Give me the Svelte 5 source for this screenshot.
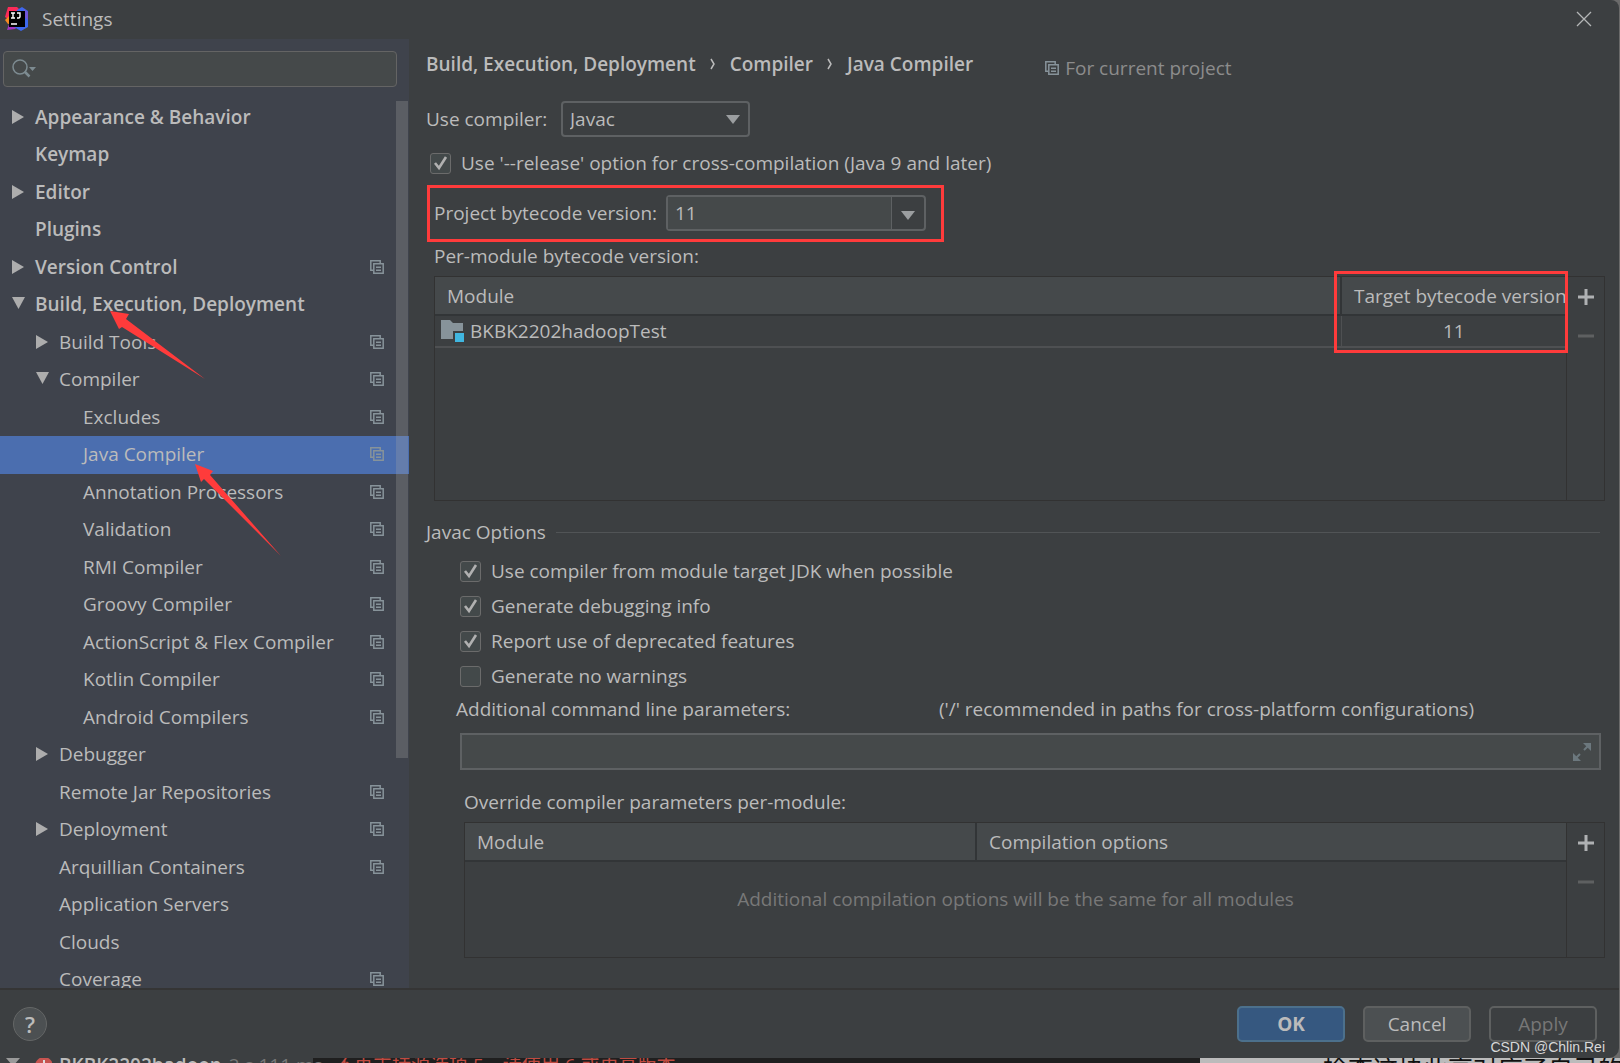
<script lang="ts">
	type Item = {
		label: string;
		level: number;
		arrow?: "open" | "closed";
		project?: boolean;
		selected?: boolean;
	};

	const items: Item[] = [
		{ label: "Appearance & Behavior", level: 0, arrow: "closed" },
		{ label: "Keymap", level: 0 },
		{ label: "Editor", level: 0, arrow: "closed" },
		{ label: "Plugins", level: 0 },
		{ label: "Version Control", level: 0, arrow: "closed", project: true },
		{ label: "Build, Execution, Deployment", level: 0, arrow: "open" },
		{ label: "Build Tools", level: 1, arrow: "closed", project: true },
		{ label: "Compiler", level: 1, arrow: "open", project: true },
		{ label: "Excludes", level: 2, project: true },
		{ label: "Java Compiler", level: 2, project: true, selected: true },
		{ label: "Annotation Processors", level: 2, project: true },
		{ label: "Validation", level: 2, project: true },
		{ label: "RMI Compiler", level: 2, project: true },
		{ label: "Groovy Compiler", level: 2, project: true },
		{ label: "ActionScript & Flex Compiler", level: 2, project: true },
		{ label: "Kotlin Compiler", level: 2, project: true },
		{ label: "Android Compilers", level: 2, project: true },
		{ label: "Debugger", level: 1, arrow: "closed" },
		{ label: "Remote Jar Repositories", level: 1, project: true },
		{ label: "Deployment", level: 1, arrow: "closed", project: true },
		{ label: "Arquillian Containers", level: 1, project: true },
		{ label: "Application Servers", level: 1 },
		{ label: "Clouds", level: 1 },
		{ label: "Coverage", level: 1, project: true },
	];

	let options = $state([
		{ label: "Use compiler from module target JDK when possible", checked: true },
		{ label: "Generate debugging info", checked: true },
		{ label: "Report use of deprecated features", checked: true },
		{ label: "Generate no warnings", checked: false },
	]);

	let release = $state(true);
	let compiler = $state("Javac");
	let bytecode = $state("11");
	let search = $state("");
	let parameters = $state("");
</script>

{#snippet copyIcon()}
	<svg class="copy" width="14" height="14" viewBox="0 0 14 14" aria-hidden="true">
		<path d="M3 10.2H.8V.8h9.4V3" />
		<path d="M3.8 3.8h9.4v9.4H3.8zM6 7.2h5M6 10.2h5" />
	</svg>
{/snippet}

{#snippet tools()}
	<div class="tools">
		<button aria-label="Add">
			<svg width="16" height="16" viewBox="0 0 16 16"><path d="M8 0v16M0 8h16" /></svg>
		</button>
		<button aria-label="Remove" disabled>
			<svg width="16" height="16" viewBox="0 0 16 16"><path d="M0 8h16" /></svg>
		</button>
	</div>
{/snippet}

<div class="screen">
	<div class="dialog">
		<header>
			<svg width="24" height="24" viewBox="0 0 24 24" aria-hidden="true">
				<path d="M3 0l9 0 4 4-8 11-8-5z" fill="#fc2b58" />
				<path d="M0 13l5-5 4 8-6 1z" fill="#f88a20" />
				<path d="M2 23l3-9 10 4-5 4z" fill="#a234c0" />
				<path d="M12 3l5-3 6 4v16l-7 4-7-4z" fill="#3d68ed" />
				<path d="M19 2l4 3v8l-5-4z" fill="#7256d8" />
				<path d="M4 4h16v16H4z" fill="#000" />
				<path d="M6 6h4M6 11h4M8 6v5M12 6h3v4l-1 1h-2M6 17h6" stroke="#fff" stroke-width="1.4" fill="none" />
			</svg>
			<span>Settings</span>
			<button class="close" aria-label="Close">
				<svg width="16" height="16" viewBox="0 0 16 16"><path d="M1 1l14 14M15 1L1 15" /></svg>
			</button>
		</header>

		<div class="body">
			<aside>
				<label class="search">
					<svg width="24" height="20" viewBox="0 0 24 20" aria-hidden="true">
						<circle cx="8" cy="8" r="7" />
						<path d="M12.500 12.500l5 5" stroke-width="2.500" />
						<path class="solid" d="M17 8h7l-3.500 4z" />
					</svg>
					<input type="text" aria-label="Search settings" bind:value={search} />
				</label>
				<nav>
					<ul>
						{#each items as item (item.label)}
							<li class="level-{item.level}" class:selected={item.selected}>
								<span class="arrow">
									{#if item.arrow === "closed"}
										<svg width="12" height="14" viewBox="0 0 12 14"><path d="M0 0l12 7-12 7z" /></svg>
									{:else if item.arrow === "open"}
										<svg width="13" height="16" viewBox="0 0 13 16"><path d="M0 1h13L6.500 13z" /></svg>
									{/if}
								</span>
								<a href="#settings">{item.label}</a>
								{#if item.project}{@render copyIcon()}{/if}
							</li>
						{/each}
					</ul>
					<div class="scrollbar"></div>
				</nav>
				<svg class="pointers" width="409" height="580" viewBox="0 0 409 580" aria-hidden="true">
					<path d="M110 311l19 3-3 5 79 60-83-52-3 2z" />
					<path d="M195 464l18 7-3 4 71 81-77-77-3 3z" />
				</svg>
			</aside>

			<main>
				<div class="crumbs">
					<b>Build, Execution, Deployment</b>
					<svg width="6" height="12" viewBox="0 0 6 12"><path d="M1 1l3 5-3 5" /></svg>
					<b>Compiler</b>
					<svg width="6" height="12" viewBox="0 0 6 12"><path d="M1 1l3 5-3 5" /></svg>
					<b>Java Compiler</b>
					<span class="scope">{@render copyIcon()} For current project</span>
				</div>

				<div class="compiler">
					<label for="compiler">Use compiler:</label>
					<span class="select">
						<select id="compiler" bind:value={compiler}>
							<option>Javac</option>
							<option>Eclipse</option>
						</select>
						<svg width="14" height="9" viewBox="0 0 14 9"><path d="M0 0h14L7 9z" /></svg>
					</span>
				</div>

				<label class="check release">
					<input type="checkbox" bind:checked={release} />
					Use '--release' option for cross-compilation (Java 9 and later)
				</label>

				<div class="project marked">
					<label for="bytecode">Project bytecode version:</label>
					<div class="combo">
						<input id="bytecode" type="text" bind:value={bytecode} />
						<button aria-label="Show versions">
							<svg width="14" height="9" viewBox="0 0 14 9"><path d="M0 0h14L7 9z" /></svg>
						</button>
					</div>
				</div>

				<p class="caption">Per-module bytecode version:</p>
				<div class="panel modules">
					<table>
						<thead>
							<tr><th>Module</th><th class="target">Target bytecode version</th></tr>
						</thead>
						<tbody>
							<tr>
								<td>
									<div class="module">
										<svg width="23" height="22" viewBox="0 0 23 22" aria-hidden="true">
											<path d="M0 0h9l3 3h10v16H0z" fill="#87939a" />
											<path d="M12 11h11v11H12z" fill="#3c3f41" />
											<path d="M14 13h9v9h-9z" fill="#40b6e0" />
										</svg>
										BKBK2202hadoopTest
									</div>
								</td>
								<td class="value">11</td>
							</tr>
						</tbody>
					</table>
					{@render tools()}
					<div class="frame"></div>
				</div>

				<fieldset>
					<legend>Javac Options</legend>
					<div class="options">
						{#each options as option (option.label)}
							<label class="check">
								<input type="checkbox" bind:checked={option.checked} />
								{option.label}
							</label>
						{/each}
					</div>
					<div class="hints">
						<label for="parameters">Additional command line parameters:</label>
						<span>('/' recommended in paths for cross-platform configurations)</span>
					</div>
					<div class="expandable">
						<input id="parameters" type="text" bind:value={parameters} />
						<button aria-label="Expand">
							<svg width="18" height="18" viewBox="0 0 18 18">
								<path d="M10 0h8v8zM0 10v8h8z" />
								<path d="M15 3l-4 4M3 15l4-4" class="line" />
							</svg>
						</button>
					</div>
					<p class="override">Override compiler parameters per-module:</p>
					<div class="panel overrides">
						<table>
							<thead>
								<tr><th class="name">Module</th><th>Compilation options</th></tr>
							</thead>
							<tbody>
								<tr>
									<td class="empty" colspan="2">Additional compilation options will be the same for all modules</td>
								</tr>
							</tbody>
						</table>
						{@render tools()}
					</div>
				</fieldset>
			</main>
		</div>

		<footer>
			<button class="help" aria-label="Help">?</button>
			<button class="primary">OK</button>
			<button>Cancel</button>
			<button disabled>Apply</button>
			<span class="watermark">CSDN @Chlin.Rei</span>
		</footer>
	</div>

	<div class="behind">
		<span class="run">
			<svg width="52" height="18" viewBox="0 0 52 18" aria-hidden="true">
				<path d="M6 0h14l-7 8z" fill="#9a9a9a" />
				<circle cx="44" cy="8" r="9" fill="#c75450" />
				<path d="M43 2h2v7h-2z" fill="#ddd" />
			</svg>
			<b>BKBK2202hadoop</b> 2 s 111 ms
		</span>
		<span class="error">不再支持源选项 5。请使用 6 或更高版本。</span>
		<span class="page">检查这块此高对应了自己的</span>
	</div>
</div>

<style>
	:global(body) {
		background: #6a6a6a;
	}

	.screen {
		display: flex;
		flex-direction: column;
		height: 100vh;
		overflow: hidden;
		color: #bbb;
		font: 19px/26px "Open Sans", "Noto Sans CJK SC", sans-serif;
	}

	.dialog {
		flex: 1;
		min-height: 0;
		display: flex;
		flex-direction: column;
		margin-right: 1px;
		background: #3c3f41;
		border-radius: 0 8px 10px 0;
	}

	button,
	input,
	select {
		box-sizing: border-box;
		margin: 0;
		color: inherit;
		font: inherit;
	}

	button {
		padding: 0;
		background: none;
		border: 0;
	}

	p {
		margin: 0;
	}

	header {
		box-sizing: border-box;
		display: flex;
		align-items: center;
		gap: 13px;
		height: 39px;
		padding: 0 27px 2px 5px;
	}

	header span {
		flex: 1;
	}

	.close {
		display: flex;
	}

	.close path {
		stroke: #b4b6b7;
		stroke-width: 1.3;
	}

	.body {
		flex: 1;
		min-height: 0;
		display: flex;
		border-bottom: 2px solid #353535;
	}

	aside {
		position: relative;
		flex: none;
		width: 409px;
		overflow: hidden;
		background: #3f434c;
	}

	.search {
		box-sizing: border-box;
		display: flex;
		align-items: center;
		height: 36px;
		margin: 12px 12px 12px 3px;
		padding: 0 8px;
		background: #45494a;
		border: 1px solid #646464;
		border-radius: 4px;
	}

	.search input {
		flex: 1;
		background: none;
		border: 0;
		outline: 0;
	}

	.search svg {
		fill: none;
		stroke: #7d8b91;
		stroke-width: 1.5;
	}

	.search .solid {
		fill: #7d8b91;
		stroke: none;
	}

	nav {
		position: relative;
	}

	ul {
		margin: 0;
		padding: 0;
		list-style: none;
	}

	li {
		box-sizing: border-box;
		display: flex;
		align-items: center;
		height: 37px;
		padding: 0 25px 2px 12px;
	}

	li:nth-child(even) {
		height: 38px;
	}

	li a {
		flex: 1;
		color: inherit;
		text-decoration: none;
	}

	.arrow {
		display: flex;
		width: 23px;
		fill: #adadad;
	}

	.level-0 {
		font-weight: 600;
	}

	.level-1 {
		padding-left: 36px;
	}

	.level-2 {
		padding-left: 60px;
	}

	.selected {
		background: #4b6eaf;
	}

	.copy {
		flex: none;
		fill: none;
		stroke: #87939a;
		stroke-width: 1.5;
	}

	.scrollbar {
		position: absolute;
		top: 2px;
		right: 1px;
		width: 12px;
		height: 657px;
		background: rgba(166, 166, 166, 0.28);
	}

	.pointers {
		position: absolute;
		top: -39px;
		left: 0;
		overflow: visible;
		fill: #ff3b3b;
	}

	main {
		flex: 1;
		min-width: 0;
		padding: 8px 14px 0 17px;
	}

	.crumbs {
		display: flex;
		align-items: center;
		gap: 14px;
	}

	.crumbs b {
		font-weight: 600;
	}

	.crumbs > svg {
		fill: none;
		stroke: #bbb;
		stroke-width: 1.5;
	}

	.scope {
		display: flex;
		align-items: center;
		gap: 6px;
		margin: 8px 0 0 58px;
		color: #8c8c8c;
	}

	.compiler {
		display: flex;
		align-items: center;
		margin-top: 20px;
	}

	.compiler label {
		width: 135px;
	}

	.select {
		position: relative;
	}

	select {
		display: block;
		width: 189px;
		height: 36px;
		padding: 0 7px;
		appearance: none;
		background: #3c3f41;
		border: 2px solid #5e6163;
		border-radius: 4px;
	}

	.select svg {
		position: absolute;
		top: 14px;
		right: 10px;
		fill: #9b9ea0;
	}

	.check {
		display: flex;
		align-items: center;
		gap: 10px;
	}

	.check input {
		width: 21px;
		height: 21px;
		appearance: none;
		background: #43494a;
		border: 1px solid #6b6b6b;
		border-radius: 3px;
	}

	.check input:checked {
		background: #43494a url("data:image/svg+xml,%3Csvg xmlns='http://www.w3.org/2000/svg' viewBox='0 0 19 19'%3E%3Cpath d='M4 9l4 5 7-11' fill='none' stroke='%23b0b0b0' stroke-width='2.6'/%3E%3C/svg%3E");
	}

	.release {
		margin: 13px 0 0 4px;
	}

	.marked {
		outline: 3px solid #ff3b3b;
	}

	.project {
		box-sizing: border-box;
		display: flex;
		align-items: center;
		width: 511px;
		height: 51px;
		margin: 12px 0 0 4px;
		padding: 0 4px 2px;
	}

	.project label {
		width: 232px;
	}

	.combo {
		display: flex;
		box-sizing: border-box;
		width: 260px;
		height: 36px;
		border: 2px solid #5e6163;
		border-radius: 4px;
	}

	.combo input {
		flex: 1;
		min-width: 0;
		padding: 0 7px;
		background: #45494a;
		border: 0;
	}

	.combo button {
		width: 33px;
		border-left: 1px solid #5e6163;
		fill: #9b9ea0;
	}

	.caption {
		margin: 4px 0 7px 8px;
	}

	.panel {
		position: relative;
		display: flex;
		box-sizing: border-box;
		border: 1px solid #323232;
	}

	.modules {
		height: 225px;
		margin-left: 8px;
	}

	.overrides {
		height: 136px;
		margin-left: 38px;
	}

	table {
		width: 100%;
		align-self: flex-start;
		border-collapse: collapse;
		table-layout: fixed;
	}

	th {
		box-sizing: border-box;
		height: 38px;
		padding: 0 12px;
		background: #45494b;
		border-bottom: 2px solid #323537;
		font-weight: 400;
		text-align: left;
		white-space: nowrap;
	}

	th + th {
		border-left: 2px solid #323537;
	}

	td {
		height: 30px;
		padding: 0 6px;
		border-bottom: 2px solid #4e5052;
	}

	.target {
		width: 225px;
		padding-right: 0;
	}

	.value {
		border-left: 1px solid #4e5052;
		text-align: center;
	}

	.module {
		display: flex;
		align-items: center;
		gap: 6px;
	}

	.name {
		width: 511px;
	}

	.empty {
		height: 74px;
		border: 0;
		color: #787878;
		text-align: center;
	}

	.frame {
		position: absolute;
		top: -6px;
		right: 36px;
		box-sizing: border-box;
		width: 234px;
		height: 82px;
		border: 3px solid #ff3b3b;
	}

	.tools {
		flex: none;
		display: flex;
		flex-direction: column;
		width: 37px;
		border-left: 1px solid #323232;
	}

	.tools button {
		height: 39px;
		stroke: #afb1b3;
		stroke-width: 3;
	}

	.tools button:disabled {
		stroke: #5e6061;
	}

	.tools svg {
		display: block;
		margin: auto;
	}

	fieldset {
		min-width: 0;
		margin: 18px 0 0;
		padding: 0;
		border: 0;
	}

	legend {
		display: flex;
		align-items: center;
		gap: 10px;
		width: 100%;
		padding: 0;
	}

	legend::after {
		content: "";
		flex: 1;
		height: 1px;
		margin-right: 5px;
		background: #515456;
	}

	.options {
		display: grid;
		grid-auto-rows: 34px;
		gap: 1px;
		margin: 9px 0 0 34px;
	}

	.hints {
		display: flex;
		margin: 3px 0 0 30px;
	}

	.hints label {
		width: 483px;
	}

	.expandable {
		display: flex;
		box-sizing: border-box;
		height: 37px;
		margin: 11px 4px 0 34px;
		background: #45494a;
		border: 2px solid #5e6163;
	}

	.expandable input {
		flex: 1;
		background: none;
		border: 0;
		outline: 0;
	}

	.expandable button {
		width: 34px;
		fill: #6c787e;
	}

	.expandable svg {
		display: block;
		margin: auto;
	}

	.line {
		stroke: #6c787e;
		stroke-width: 2;
	}

	.override {
		margin: 19px 0 7px 38px;
	}

	footer {
		position: relative;
		display: flex;
		align-items: center;
		gap: 18px;
		height: 68px;
		padding: 0 22px 0 13px;
	}

	footer button {
		width: 108px;
		height: 36px;
		background: #4c5052;
		border: 2px solid #5e6060;
		border-radius: 5px;
	}

	footer .primary {
		background: #365880;
		border-color: #4c708c;
		font-weight: 700;
	}

	footer button:disabled {
		background: none;
		color: #777;
	}

	footer .help {
		width: 34px;
		height: 34px;
		margin-right: auto;
		border: 1px solid #646666;
		border-radius: 50%;
		font-size: 22px;
		font-weight: 600;
		line-height: 28px;
	}

	.watermark {
		position: absolute;
		right: 14px;
		bottom: 1px;
		color: #d8d8d8;
		font: 14px/20px "Liberation Sans", sans-serif;
	}

	/* sliver of the editor window under the dialog */
	.behind {
		display: flex;
		height: 5px;
		overflow: hidden;
		background: #1f1f1f;
		line-height: 14px;
		white-space: nowrap;
	}

	.behind svg {
		flex: none;
	}

	.run {
		display: flex;
		gap: 7px;
		width: 313px;
		background: #3c3f41;
		color: #777;
	}

	.run b {
		color: #bbb;
		font-weight: 600;
	}

	.error {
		flex: 1;
		padding-left: 22px;
		color: #c04a40;
	}

	.page {
		box-sizing: border-box;
		width: 420px;
		padding-left: 123px;
		overflow: hidden;
		background: #bbb;
		color: #111;
		font-size: 25px;
		line-height: 20px;
	}
</style>
